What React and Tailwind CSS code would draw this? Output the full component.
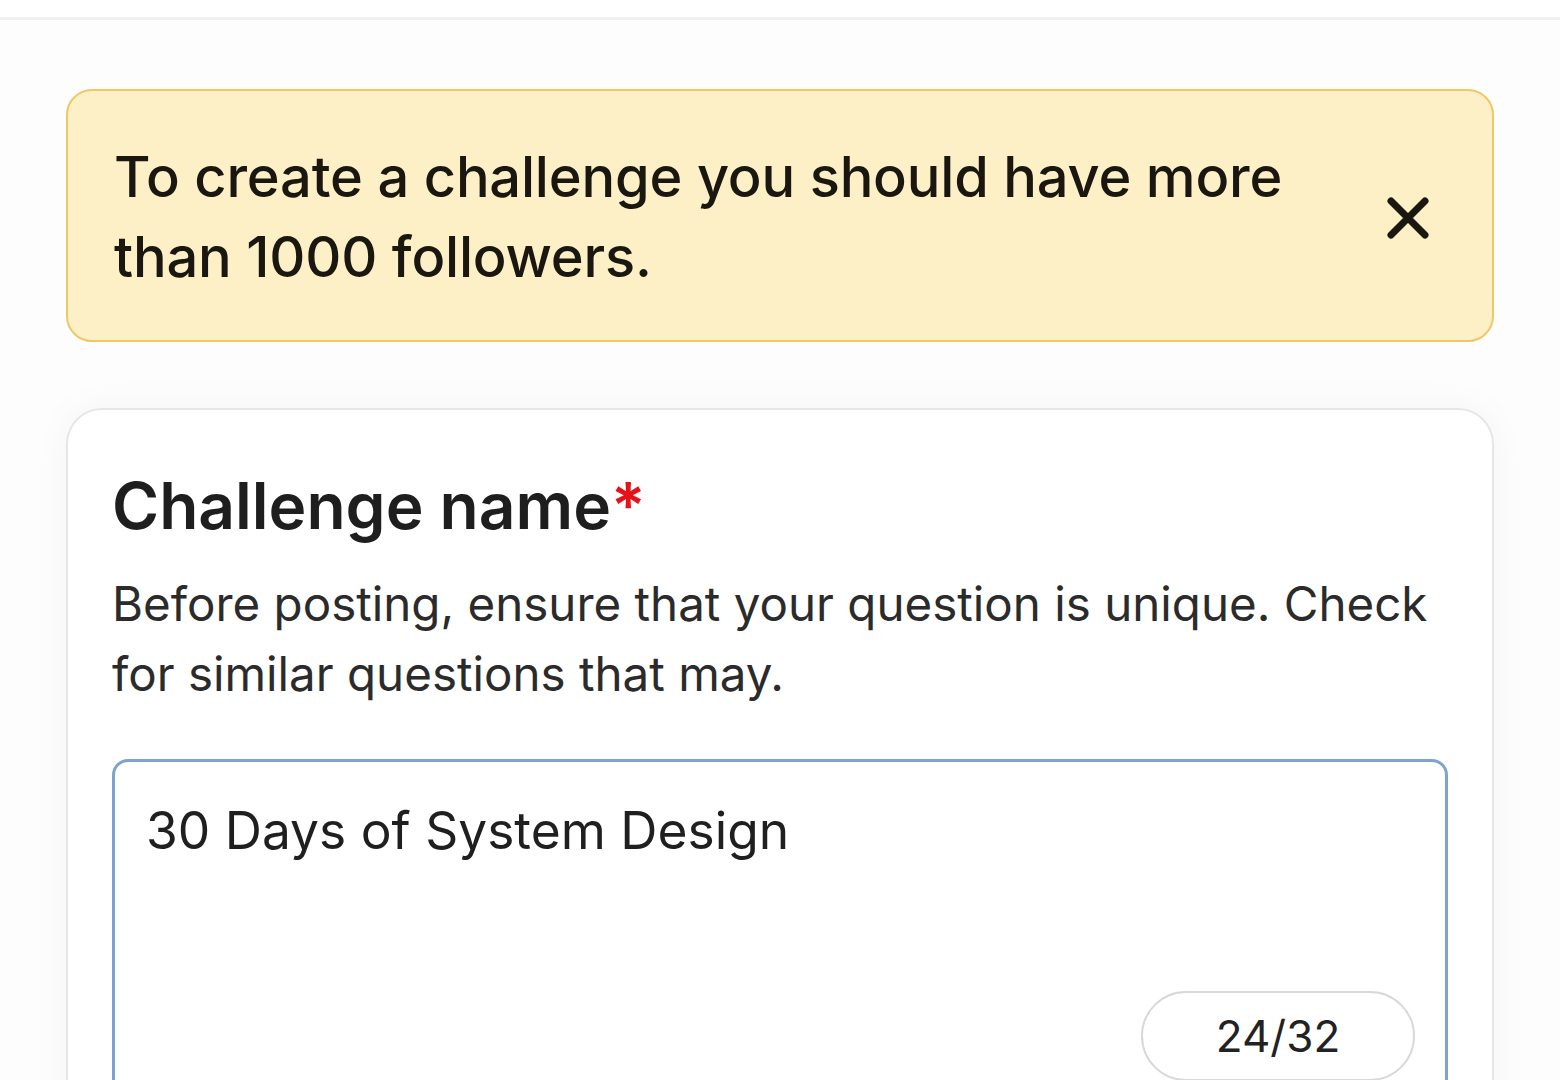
import React from "react";

export default function App() {
  return (
    <div
      className="w-[1560px] h-[1080px] overflow-hidden bg-[#fdfdfd] text-[#1c1c1c]"
      style={{ fontFamily: "Inter, 'Noto Sans', sans-serif" }}
    >
      <div className="h-[20px] bg-white border-b-[3px] border-[#f0f0f0]" />
      <div className="px-[66px] pt-[69px]">
        <div className="flex items-center justify-between rounded-[26px] border-[2px] border-[#eec865] bg-[#fdf0c7] pl-[46px] pr-[62px] pt-[46px] pb-[43px]">
          <p className="text-[56px] font-medium leading-[80px] text-[#1a1711] w-[1200px] tracking-[-0.2px]">
            To create a challenge you should have more than 1000 followers.
          </p>
          <svg width="44" height="44" viewBox="0 0 44 44" className="shrink-0 mt-[2px]">
            <path d="M5 5 L39 39 M39 5 L5 39" stroke="#1a1711" strokeWidth="7" strokeLinecap="round" />
          </svg>
        </div>
        <div className="mt-[66px] rounded-[36px] border-[2px] border-[#e6e6e6] bg-white px-[44px] pt-[56px] h-[800px] shadow-[0_0_40px_rgba(0,0,0,0.04)]">
          <h2 className="text-[64px] font-semibold leading-[80px] text-[#1e1e1e]">
            Challenge name<span className="text-[#e5121a]">*</span>
          </h2>
          <p className="mt-[23px] text-[47.5px] leading-[70px] text-[#2b2b2b]">
            Before posting, ensure that your question is unique. Check for similar questions that may.
          </p>
          <div className="mt-[50px] relative h-[400px] rounded-[16px] border-[3px] border-[#7fa3cf] px-[31px] pt-[36px]">
            <div className="text-[51.5px] leading-[64px] text-[#1f1f1f]">30 Days of System Design</div>
            <div className="absolute right-[30px] top-[229px] w-[274px] h-[90px] rounded-full border-[2px] border-[#d8d8d8] flex items-center justify-center text-[44px] text-[#222]">
              24/32
            </div>
          </div>
        </div>
      </div>
    </div>
  );
}
